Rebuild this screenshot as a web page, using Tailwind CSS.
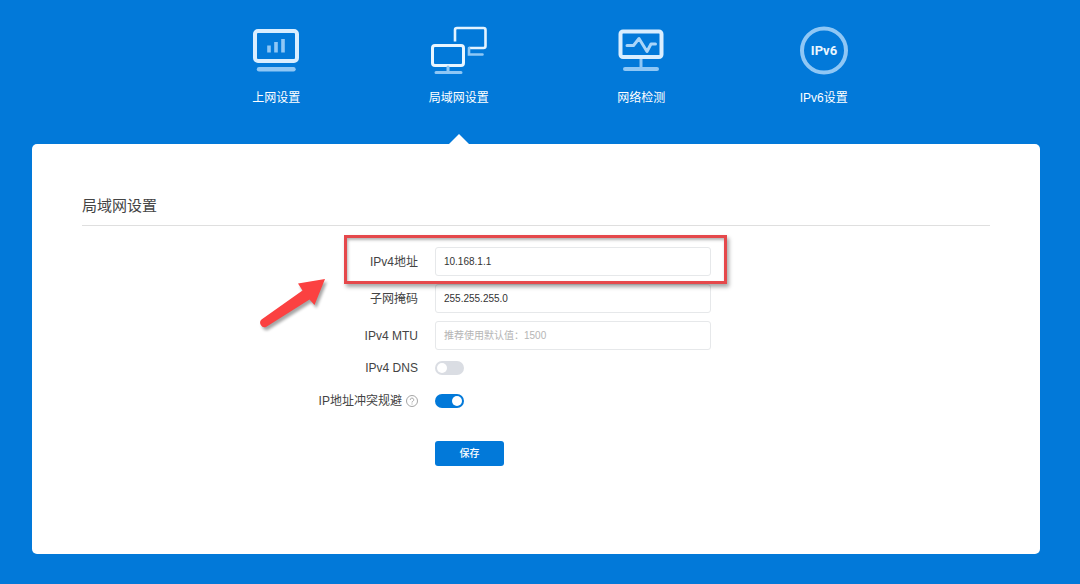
<!DOCTYPE html>
<html lang="zh-CN">
<head>
<meta charset="utf-8">
<meta name="viewport" content="width=device-width, initial-scale=1">
<title>局域网设置</title>
<script src="https://cdn.jsdelivr.net/npm/@tailwindcss/browser@4"></script>
</head>
<body class="min-h-screen bg-[#0279d9] pr-10 pb-7 pl-8 font-['Liberation_Sans','Noto_Sans_CJK_SC',sans-serif] text-xs text-[#444]">
<nav class="ml-[153px] flex max-w-[730px] text-xs leading-4 text-white">
  <a href="#wan" class="flex h-36 flex-1 flex-col items-center pt-6">
    <svg class="h-[52px] w-16" viewBox="0 0 64 52" fill="none" aria-hidden="true">
      <rect x="11" y="7" width="42" height="30" rx="3" stroke="#d9eeff" stroke-width="4"/>
      <path d="M25 28.500v-7M32 28.500v-10.500M39 28.500v-13.500" stroke="#8fc7f5" stroke-width="3.600"/>
      <path d="M15 45.200h34.500" stroke="#8fc7f5" stroke-width="4.400" stroke-linecap="round"/>
    </svg>
    <span class="mt-[14px]">上网设置</span>
  </a>
  <a href="#lan" aria-current="page" class="relative flex h-36 flex-1 flex-col items-center pt-6">
    <svg class="h-[52px] w-16" viewBox="0 0 64 52" fill="none" aria-hidden="true">
      <path d="M28 17.500V6a2 2 0 0 1 2-2h26.500a2 2 0 0 1 2 2v16a2 2 0 0 1-2 2H42" stroke="#e3f3ff" stroke-width="2.600"/>
      <path d="M42 24v6.500h13.500" stroke="#8fc7f5" stroke-width="2.600" stroke-linecap="round"/>
      <rect x="5.500" y="21.500" width="31" height="20" rx="2.500" stroke="#e9f6ff" stroke-width="3"/>
      <path d="M21 43v5.500M9 48.500h25" stroke="#8fc7f5" stroke-width="3" stroke-linecap="round"/>
    </svg>
    <span class="mt-[14px]">局域网设置</span>
    <svg class="absolute bottom-0 h-[10px] w-5" viewBox="0 0 20 10" aria-hidden="true"><path d="M0 10L10 0l10 10z" fill="#fff"/></svg>
  </a>
  <a href="#check" class="flex h-36 flex-1 flex-col items-center pt-6">
    <svg class="h-[52px] w-16" viewBox="0 0 64 52" fill="none" aria-hidden="true">
      <rect x="11.500" y="7.500" width="41" height="25.500" rx="2.500" stroke="#d9eeff" stroke-width="4"/>
      <path d="M18 21.500h6.500l5.500-7 8 13 4-7.500h4.500" stroke="#a9d5f9" stroke-width="3" stroke-linejoin="round" stroke-linecap="round"/>
      <path d="M32 35v9" stroke="#8fc7f5" stroke-width="3"/>
      <path d="M16 45h32" stroke="#8fc7f5" stroke-width="4" stroke-linecap="round"/>
    </svg>
    <span class="mt-[14px]">网络检测</span>
  </a>
  <a href="#ipv6" class="flex h-36 flex-1 flex-col items-center pt-6">
    <svg class="h-[52px] w-16" viewBox="0 0 64 52" fill="none" aria-hidden="true">
      <circle cx="32" cy="26.500" r="22" stroke="#8fc7f5" stroke-width="4"/>
      <text x="32" y="31" text-anchor="middle" fill="#e9f6ff" font-family="Roboto, sans-serif" font-weight="700" font-size="13">IPv6</text>
    </svg>
    <span class="mt-[14px]">IPv6设置</span>
  </a>
</nav>

<main class="rounded-[5px] bg-white px-[50px] pt-[50px] pb-[88px]">
  <h1 class="border-b border-[#dfdfdf] pb-[7px] text-[15px] leading-6">局域网设置</h1>
  <form class="mt-[21px] flex flex-col">
    <div class="relative flex items-center gap-[17px]">
      <label for="ip" class="w-[37%] text-right">IPv4地址</label>
      <input id="ip" type="text" value="10.168.1.1" class="h-[29px] w-[276px] rounded-[3px] border border-[#e6e8ea] px-2 pb-px text-[10px] text-[#333]">
      <div class="pointer-events-none absolute -top-3 left-[262px] z-10 h-[49px] w-[383px] border-3 border-[#e5484b] shadow-[2px_3px_4px_rgba(0,0,0,0.35),inset_1px_2px_3px_rgba(0,0,0,0.3)]"></div>
      <svg class="pointer-events-none absolute top-[27px] left-[170px] h-[64px] w-[84px]" viewBox="0 0 84 64" aria-hidden="true">
        <path d="M73 5L46 9.500l4.500 7L9.500 45.500a4.500 4.500 0 0 0 4.500 7.500L57.500 25.500l5 5.500z" fill="#000" opacity=".35" transform="translate(2 3)" style="filter:blur(1.500px)"/>
        <path d="M73 5L46 9.500l4.500 7L9.500 45.500a4.500 4.500 0 0 0 4.500 7.500L57.500 25.500l5 5.500z" fill="#fb4141"/>
      </svg>
    </div>
    <div class="mt-2 flex items-center gap-[17px]">
      <label for="mask" class="w-[37%] text-right">子网掩码</label>
      <input id="mask" type="text" value="255.255.255.0" class="h-[29px] w-[276px] rounded-[3px] border border-[#e6e8ea] px-2 pb-px text-[10px] text-[#333]">
    </div>
    <div class="mt-2 flex items-center gap-[17px]">
      <label for="mtu" class="w-[37%] text-right">IPv4 MTU</label>
      <input id="mtu" type="text" placeholder="推荐使用默认值：1500" class="h-[29px] w-[276px] rounded-[3px] border border-[#e6e8ea] px-2 pb-px text-[10px] placeholder:text-[#b5b5b5]">
    </div>
    <div class="mt-2 flex h-5 items-center gap-[17px]">
      <label for="dns" class="w-[37%] text-right">IPv4 DNS</label>
      <input id="dns" type="checkbox" role="switch" class="flex h-[14px] w-[29px] appearance-none items-center rounded-full bg-[#dadde3] px-[2px] before:size-[10px] before:rounded-full before:bg-white checked:justify-end checked:bg-[#0279d9]">
    </div>
    <div class="mt-[13px] flex h-5 items-center gap-[17px]">
      <div class="flex w-[37%] items-center justify-end gap-1">
        <label for="conflict">IP地址冲突规避</label>
        <button type="button" aria-label="帮助">
          <svg class="size-[12px]" viewBox="0 0 12 12" fill="none" stroke="#a5a5a5" aria-hidden="true">
            <circle cx="6" cy="6" r="5.500"/>
            <path d="M4.300 4.800a1.700 1.700 0 1 1 2.500 1.500C6.200 6.600 6 6.800 6 7.500M6 8.500v1"/>
          </svg>
        </button>
      </div>
      <input id="conflict" type="checkbox" role="switch" checked class="flex h-[14px] w-[29px] appearance-none items-center rounded-full bg-[#dadde3] px-[2px] before:size-[10px] before:rounded-full before:bg-white checked:justify-end checked:bg-[#0279d9]">
    </div>
    <div class="mt-[30px] flex gap-[17px]">
      <div class="w-[37%]"></div>
      <button type="submit" class="h-[25px] w-[69px] rounded-[3px] bg-[#0279d9] text-[10px] font-medium text-white">保存</button>
    </div>
  </form>
</main>
</body>
</html>
